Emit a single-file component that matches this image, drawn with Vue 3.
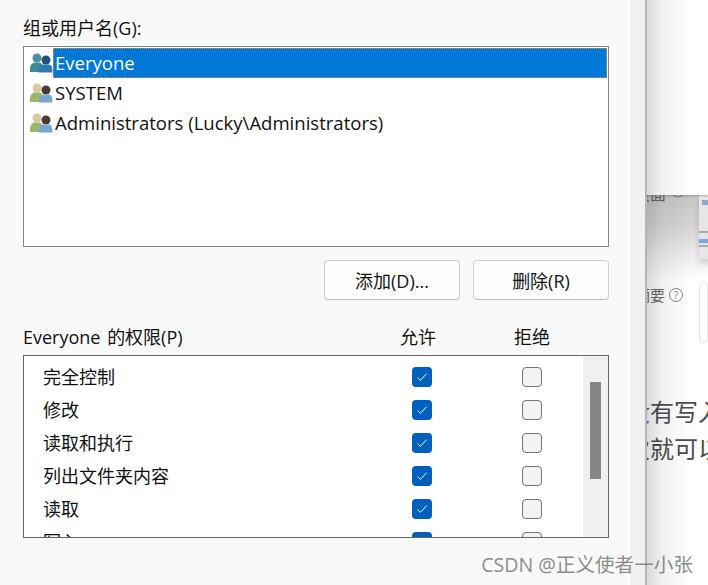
<script setup>
const users = [
  { name: 'Everyone', selected: true, a: '#3f8a98', b: '#2f78b8', ah: '#4a8f9c', bh: '#24527d' },
  { name: 'SYSTEM', selected: false, a: '#9cb76a', b: '#7aa5cf', ah: '#d9c9a0', bh: '#4b3a2f' },
  { name: 'Administrators (Lucky\\Administrators)', selected: false, a: '#9cb76a', b: '#7aa5cf', ah: '#d9c9a0', bh: '#4b3a2f' }
]
const perms = ['完全控制', '修改', '读取和执行', '列出文件夹内容', '读取', '写入']
</script>

<template>
  <div class="screen">
    <section class="dialog">
      <div class="dialog-body">
        <div class="label top-label">组或用户名(G):</div>
        <div class="user-list">
          <div v-for="u in users" :key="u.name" class="user-row">
            <svg class="user-icon" width="24" height="20" viewBox="0 0 24 20">
              <circle cx="8" cy="5" r="4.500" :fill="u.ah" />
              <path d="M1 19c-.5-6 1.500-9.500 5-9.500h4c2 0 3 1 3.500 3V19z" :fill="u.a" />
              <circle cx="17" cy="7" r="4.500" :fill="u.bh" />
              <path d="M9.500 19.500c0-5 1.500-8 4.500-8h6c2.500 0 3.500 3 3.500 8z" :fill="u.b" />
            </svg>
            <span class="user-name" :class="{ selected: u.selected }">{{ u.name }}</span>
          </div>
        </div>
        <div class="buttons">
          <button class="btn">添加(D)...</button>
          <button class="btn">删除(R)</button>
        </div>
        <div class="perm-head">
          <span class="label perm-title">Everyone 的权限(P)</span>
          <span class="label col allow">允许</span>
          <span class="label col deny">拒绝</span>
        </div>
        <div class="perm-box">
          <div class="perm-rows">
            <div v-for="p in perms" :key="p" class="perm-row">
              <span class="perm-name">{{ p }}</span>
              <span class="check on">
                <svg width="12" height="10" viewBox="0 0 12 10"><path d="M1.500 5.500l3 2.800 6-6.600" fill="none" stroke="#fff" stroke-width="1" /></svg>
              </span>
              <span class="check off"></span>
            </div>
          </div>
          <div class="scrollbar"><div class="thumb"></div></div>
        </div>
      </div>
    </section>
    <div class="strip"></div>
    <div class="edge"></div>
    <section class="page">
      <div class="page-top"></div>
      <div class="band">
        <div class="band-left">
          <span class="clip-text">页面</span>
          <svg class="info" width="14" height="14" viewBox="0 0 14 14"><circle cx="7" cy="7" r="6" fill="none" stroke="#8a8a8a" stroke-width="1.200" /><path d="M7 4v5" stroke="#8a8a8a" /></svg>
        </div>
        <div class="thumbnail">
          <div class="thumb-dots"></div>
          <div class="thumb-line"></div>
          <div class="thumb-blue"></div>
          <div class="thumb-line"></div>
        </div>
      </div>
      <div class="summary">
        <div class="summary-label">
          <span>摘要</span>
          <span class="help">?</span>
        </div>
        <div class="summary-box"></div>
      </div>
      <p class="article">没有写入</p>
      <p class="article">次就可以</p>
      <div class="left-shadow"></div>
    </section>
    <div class="watermark">CSDN @正义使者一小张</div>
  </div>
</template>

<style>
html, body { margin: 0; padding: 0; background: #fff; }
</style>

<style scoped>
.screen {
  position: relative;
  display: flex;
  width: 708px;
  height: 585px;
  overflow: hidden;
  font-family: "Open Sans", "Noto Sans CJK SC", sans-serif;
  color: #111;
}
.dialog {
  width: 632px;
  flex: none;
  height: 585px;
  background: #f9f9f9;
  border-right: 1px solid #ebebeb;
  box-sizing: border-box;
}
.dialog-body {
  padding: 16px 0 0 23px;
  width: 586px;
}
.label { font-size: 18px; line-height: 24px; }
.top-label { height: 30px; }
.user-list {
  height: 198px;
  border: 1px solid #82878c;
  background: #fff;
  padding-top: 1px;
  padding-right: 1px;
  box-sizing: content-box;
  width: 583px;
}
.user-row {
  display: flex;
  align-items: center;
  height: 30px;
  padding-left: 5px;
}
.user-icon { flex: none; }
.user-name {
  font-size: 18.550px;
  line-height: 30px;
  padding-left: 2px;
  flex: 1;
  white-space: nowrap;
  box-sizing: border-box;
}
.user-name.selected {
  background: #0078d7;
  color: #fff;
  outline: 1px dotted #f28c28;
  outline-offset: -1px;
}
.buttons {
  display: flex;
  justify-content: flex-end;
  gap: 13px;
  margin-top: 13px;
}
.btn {
  width: 136px;
  height: 40px;
  border: 1px solid #cfcfcf;
  border-bottom-color: #bdbdbd;
  border-radius: 4px;
  background: #fdfdfd;
  font: inherit;
  font-size: 18px;
  color: #111;
  padding: 0;
}
.perm-head {
  display: flex;
  align-items: center;
  height: 24px;
  margin-top: 25px;
  margin-bottom: 6px;
}
.perm-title { width: 377px; white-space: nowrap; word-spacing: 2px; }
.col { text-align: left; }
.allow { width: 114px; }
.perm-box {
  display: flex;
  height: 181px;
  border: 1px solid #666;
  background: #fff;
  overflow: hidden;
}
.perm-rows { flex: 1; padding-top: 4px; }
.perm-row {
  display: flex;
  align-items: center;
  height: 33px;
  padding-left: 19px;
}
.perm-name {
  width: 369px;
  font-size: 18px;
  line-height: 24px;
  flex: none;
}
.check {
  width: 20px;
  height: 20px;
  box-sizing: border-box;
  border-radius: 4px;
  flex: none;
  display: flex;
  align-items: center;
  justify-content: center;
}
.check.on { background: #0060c0; }
.check.off {
  margin-left: 90px;
  border: 1px solid #757575;
  background: #f3f3f3;
}
.scrollbar {
  width: 25px;
  flex: none;
  background: #f0f0f0;
  padding: 26px 7px 0;
  box-sizing: border-box;
}
.thumb { width: 11px; height: 97px; background: #868686; }
.strip { width: 13px; flex: none; background: #f1f1f1; }
.edge { width: 2px; flex: none; background: #b5b5b5; }
.page {
  position: relative;
  flex: 1;
  min-width: 0;
  overflow: hidden;
  background: #fff;
  display: flex;
  flex-direction: column;
}
.page-top {
  height: 195px;
  flex: none;
  background: #fff;
  position: relative;
  z-index: 1;
  box-shadow: 0 1px 2px rgba(0, 0, 0, .25);
}
.band {
  height: 85px;
  flex: none;
  background: linear-gradient(to bottom, #c6c6c6, #d4d4d4 35%, #ffffff);
  position: relative;
  display: flex;
}
.band-left {
  width: 52px;
  flex: none;
  display: flex;
  align-items: flex-start;
  gap: 5px;
  margin-top: -9px;
  overflow: hidden;
}
.clip-text {
  font-size: 16px;
  color: #666;
  margin-left: -13px;
  line-height: 16px;
  white-space: nowrap;
}
.info { flex: none; margin-top: -2px; }
.thumbnail {
  width: 12px;
  height: 64px;
  background: #e6e6e6;
  flex: none;
  display: flex;
  flex-direction: column;
  padding-top: 5px;
  box-sizing: border-box;
  box-shadow: 0 4px 6px rgba(0, 0, 0, .15);
}
.thumb-dots { height: 5px; width: 8px; margin-left: 3px; background: #8fa9c9; flex: none; }
.thumb-line { height: 2px; background: #aaa; margin-top: 2px; flex: none; }
.thumb-line:nth-child(2) { margin-top: 26px; }
.thumb-blue { height: 4px; background: #7ea6e0; margin-top: 6px; flex: none; }
.summary {
  display: flex;
  align-items: flex-start;
  height: 99px;
  flex: none;
}
.summary-label {
  width: 52px;
  flex: none;
  display: flex;
  align-items: center;
  gap: 4px;
  font-size: 15px;
  color: #6b6b6b;
  overflow: hidden;
  margin-top: 4px;
}
.summary-label span:first-child { margin-left: -12px; white-space: nowrap; }
.help {
  width: 12px;
  height: 12px;
  flex: none;
  border: 1px solid #8a8a8a;
  border-radius: 50%;
  font-size: 10px;
  line-height: 12px;
  text-align: center;
  color: #8a8a8a;
}
.summary-box {
  width: 40px;
  height: 61px;
  border: 1px solid #e6e6e6;
  border-radius: 4px;
  margin-top: 2px;
  box-sizing: border-box;
}
.article {
  margin: 0 0 0 -21px;
  font-size: 24px;
  line-height: 37px;
  height: 37px;
  color: #4d4d4d;
  white-space: nowrap;
}
.article:first-of-type { margin-top: 14px; }
.left-shadow {
  position: absolute;
  inset: 0;
  z-index: 2;
  pointer-events: none;
  background: linear-gradient(to right, rgba(0, 0, 0, .14), rgba(0, 0, 0, .06) 15px, rgba(0, 0, 0, 0) 45px);
}
.watermark {
  position: absolute;
  right: 15px;
  top: 553px;
  font-size: 19.600px;
  line-height: 24px;
  color: rgba(110, 110, 110, .8);
  white-space: nowrap;
  z-index: 3;
}
</style>
